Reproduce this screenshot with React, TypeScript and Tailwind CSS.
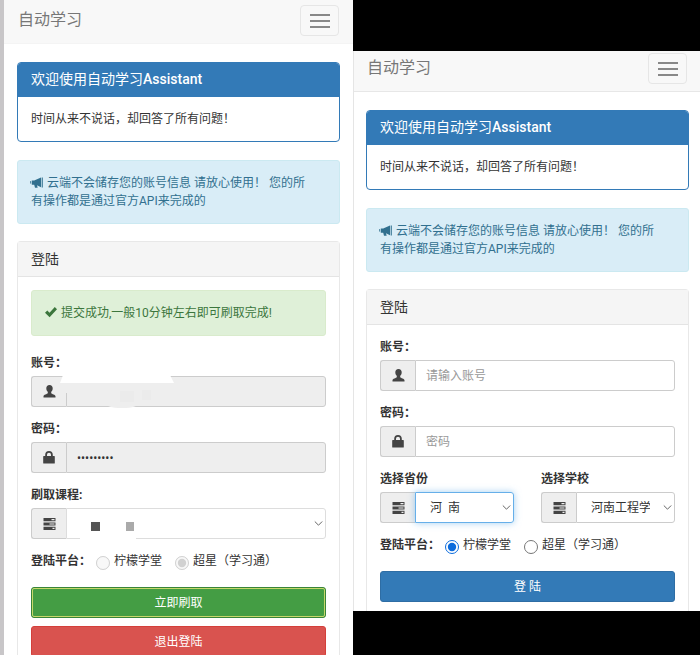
import { useState } from "react"
import type { ReactNode } from "react"

type ChildrenProps = {
  children: ReactNode
}

type FieldProps = {
  id: string
  label: string
  icon: ReactNode
  children: ReactNode
}

type PlatformProps = {
  name: string
  value: string
  disabled?: boolean
}

const platforms = [
  { value: "lemon", label: "柠檬学堂" },
  { value: "chaoxing", label: "超星（学习通）" },
]

const inputClass = "h-full w-full min-w-0 rounded-r-[3px] border px-[10px] text-xs outline-none placeholder:text-[#999]"
const buttonClass = "block h-[31px] w-full rounded-[3px] border text-center text-xs text-white"

const BullhornIcon = () => (
  <svg className="mr-1 -ml-px inline h-3 w-[13px] align-[-2px]" viewBox="0 0 13 12" fill="currentColor" aria-hidden="true">
    <path d="M0 4.200h1.100v2.600H.5zM1.800 3.400h2.400L11 .6v9.600L7 8.300l.7 2.500H5L4.200 7.800H1.800z" />
    <path d="M11.700 .4h1.100v10.200h-1.100z" />
  </svg>
)

const CheckIcon = () => (
  <svg className="mr-1 inline h-3 w-3 align-[-1px]" viewBox="0 0 12 12" fill="currentColor" aria-hidden="true">
    <path d="M0 6.700 2.300 4.500l2.200 2.200L9.800 1 12 3.200 4.600 11.200z" />
  </svg>
)

const UserIcon = () => (
  <svg className="h-[13px] w-[13px]" viewBox="0 0 13 13" fill="currentColor" aria-hidden="true">
    <path d="M6.500 0c2.100 0 3.200 1.300 3.200 3.200 0 1.700-.7 2.900-1.500 3.600v1.400c.6.900 4.300 1.300 4.300 3.100V12.500H.5v-1.200c0-1.800 3.700-2.200 4.300-3.100V6.800C4 6.100 3.300 4.900 3.300 3.200 3.300 1.300 4.400 0 6.500 0z" />
  </svg>
)

const LockIcon = () => (
  <svg className="h-[13px] w-3" viewBox="0 0 12 13" fill="currentColor" aria-hidden="true">
    <path d="M.8 5h1.400V3.800a3.800 3.800 0 0 1 7.600 0V5h1.400q.6 0 .6.600v6.300q0 .6-.6.600H.8q-.6 0-.6-.6V5.600Q.2 5 .8 5zM4 5h4V3.800a2 2 0 0 0-4 0z" fillRule="evenodd" />
  </svg>
)

const TasksIcon = () => (
  <svg className="h-3 w-[13px]" viewBox="0 0 13 12" fill="currentColor" aria-hidden="true">
    <path d="M.5 0h12v3.200H.5zM8.500 1v1.200h3V1zM.5 4.400h12v3.200H.5zM6.500 5.400v1.200h5V5.400zM.5 8.800h12V12H.5zM9.500 9.800V11h2V9.800z" fillRule="evenodd" />
  </svg>
)

const Chevron = () => (
  <svg className="pointer-events-none absolute top-3 right-[3px] h-[7px] w-[9px]" viewBox="0 0 9 7" fill="none" stroke="#666" aria-hidden="true">
    <path d="M.8 1.500 4.500 5.200 8.200 1.500" />
  </svg>
)

const Navbar = ({ className }: { className: string }) => (
  <nav className={`flex justify-between border-b bg-[#f8f8f8] ${className}`}>
    <a href="#" className="text-base leading-[30px] text-[#777]">自动学习</a>
    <button aria-label="菜单" className="flex h-[31px] w-[39px] flex-col items-center justify-center gap-1 rounded-[4px] border border-[#e6e6e6]">
      <span className="h-[2px] w-5 bg-[#888]" />
      <span className="h-[2px] w-5 bg-[#888]" />
      <span className="h-[2px] w-5 bg-[#888]" />
    </button>
  </nav>
)

const Intro = () => (
  <>
    <section className="mb-[18px] overflow-hidden rounded-[4px] border border-[#337ab7]">
      <h3 className="bg-[#337ab7] px-[13px] pt-[7px] pb-[9px] text-sm leading-[18px] text-white">
        欢迎使用自动学习<b className="font-medium">Assistant</b>
      </h3>
      <p className="p-[13px] leading-[18px]">时间从来不说话，却回答了所有问题！</p>
    </section>
    <p className="mb-[17px] rounded-[3px] border border-[#cbe9f1] bg-[#d9edf7] py-[13px] pr-6 pl-[13px] leading-[18px] text-[#31708f]">
      <BullhornIcon />云端不会储存您的账号信息 请放心使用！ 您的所有操作都是通过官方API来完成的
    </p>
  </>
)

const LoginPanel = ({ children }: ChildrenProps) => (
  <section className="rounded-t-[4px] border border-b-0 border-[#e8e8e8]">
    <h3 className="border-b border-[#e4e4e4] bg-[#f5f5f5] px-[13px] py-2 text-sm leading-[18px]">登陆</h3>
    <form className="px-[13px] pt-[13px]" onSubmit={e => e.preventDefault()}>{children}</form>
  </section>
)

const Field = ({ id, label, icon, children }: FieldProps) => (
  <div className="mb-[13px] min-w-0 flex-1">
    <label htmlFor={id} className="mb-1 block leading-[18px] font-bold">{label}</label>
    <div className="flex h-[31px]">
      <span className="flex w-[35px] shrink-0 items-center justify-center rounded-l-[3px] border border-r-0 border-[#ccc] bg-[#eee] text-[#444]">
        {icon}
      </span>
      <div className="relative min-w-0 flex-1">{children}</div>
    </div>
  </div>
)

const PlatformPicker = ({ name, value, disabled }: PlatformProps) => {
  const [selected, setSelected] = useState(value)

  return (
    <fieldset className="mb-[17px] leading-[18px]" disabled={disabled}>
      <legend className="float-left mr-[5px] font-bold">登陆平台：</legend>
      <div className="flex gap-[13px]">
        {platforms.map(p => (
          <label key={p.value} className="flex gap-1">
            <input
              type="radio"
              name={name}
              className="mt-1 size-[14px] accent-[#0b6bdc]"
              checked={selected === p.value}
              onChange={() => setSelected(p.value)}
            />
            {p.label}
          </label>
        ))}
      </div>
    </fieldset>
  )
}

const SubmittedPage = () => (
  <div className="overflow-hidden border-l-4 border-[#c8c6c8] bg-white">
    <Navbar className="h-11 border-[#f4f4f4] pt-[5px] pr-[14px] pl-[14px]" />
    <div className="px-[13px] pt-[18px]">
      <Intro />
      <LoginPanel>
        <p className="mb-[18px] rounded-[3px] border border-[#d9ebcc] bg-[#dff0d8] p-[13px] leading-[18px] text-[#3c763d]">
          <CheckIcon />提交成功,一般10分钟左右即可刷取完成!
        </p>
        <Field id="done-account" label="账号：" icon={<UserIcon />}>
          <input id="done-account" className={`${inputClass} border-[#ccc] bg-[#eee]`} disabled />
          <svg className="pointer-events-none absolute -top-px -left-[6px] h-9 w-[120px]" viewBox="0 0 120 36" aria-hidden="true">
            <path d="M5 7h8v11H5z" fill="#eee" />
            <path d="M0 8 3 0h107l4 8z" fill="#fff" />
            <path d="M44 27h36q-2 6-18 6t-18-6z" fill="#eee" />
            <path d="M60 16h14v11H60zM82 15h9v10h-9z" fill="#ebebeb" />
          </svg>
        </Field>
        <Field id="done-password" label="密码：" icon={<LockIcon />}>
          <input id="done-password" type="password" defaultValue="123456789" className={`${inputClass} border-[#ccc] bg-[#eee]`} disabled />
        </Field>
        <Field id="course" label="刷取课程:" icon={<TasksIcon />}>
          <select id="course" className={`${inputClass} appearance-none border-[#ddd] bg-white`} />
          <Chevron />
          <svg className="pointer-events-none absolute top-[14px] left-[14px] h-[18px] w-[56px]" viewBox="0 0 56 18" aria-hidden="true">
            <path d="M0 0h56v18H0z" fill="#fff" />
            <path d="M11 0h9v9h-9z" fill="#555" />
            <path d="M46 0h8v9h-8z" fill="#aaa" />
          </svg>
        </Field>
        <PlatformPicker name="done-platform" value="chaoxing" disabled />
        <button className={`${buttonClass} mb-2 border-[#398439] bg-[#449d44] outline outline-offset-[-2px] outline-[#c5d86a]`}>立即刷取</button>
        <button className={`${buttonClass} border-[#d43f3a] bg-[#d9534f]`}>退出登陆</button>
      </LoginPanel>
    </div>
  </div>
)

const LoginPage = () => (
  <div className="bg-black pt-[51px]">
    <div className="border-l border-[#e5e5e5] bg-white">
      <Navbar className="h-[41px] border-[#e7e7e7] pt-[2px] pr-[13px] pl-[13px]" />
      <div className="pt-[18px] pr-[11px] pl-3">
        <Intro />
        <LoginPanel>
          <Field id="account" label="账号：" icon={<UserIcon />}>
            <input id="account" placeholder="请输入账号" className={`${inputClass} border-[#ccc]`} />
          </Field>
          <Field id="password" label="密码：" icon={<LockIcon />}>
            <input id="password" type="password" placeholder="密码" className={`${inputClass} border-[#ccc]`} />
          </Field>
          <div className="flex gap-[27px]">
            <Field id="province" label="选择省份" icon={<TasksIcon />}>
              <select id="province" className={`${inputClass} appearance-none border-[#66afe9] pl-[14px] shadow-[0_0_7px_#66afe999]`}>
                <option>河&nbsp; 南</option>
              </select>
              <Chevron />
            </Field>
            <Field id="school" label="选择学校" icon={<TasksIcon />}>
              <select id="school" className={`${inputClass} appearance-none border-[#ccc] pr-6 pl-[14px]`}>
                <option>河南工程学院</option>
              </select>
              <Chevron />
            </Field>
          </div>
          <PlatformPicker name="platform" value="lemon" />
          <div className="pb-[9px]">
            <button className={`${buttonClass} border-[#2e6da4] bg-[#337ab7]`}>登 陆</button>
          </div>
        </LoginPanel>
      </div>
    </div>
  </div>
)

const App = () => (
  <main className="grid h-screen grid-cols-[353fr_347fr] overflow-hidden bg-white font-[Roboto,'Noto_Sans_CJK_SC',sans-serif] text-xs text-[#333]">
    <SubmittedPage />
    <LoginPage />
  </main>
)

export default App
